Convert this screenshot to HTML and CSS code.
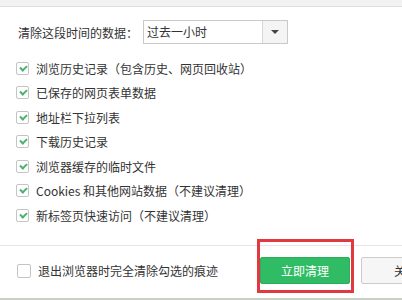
FILE: index.html
```html
<!DOCTYPE html>
<html lang="zh-CN">
<head>
<meta charset="utf-8">
<link rel="stylesheet" href="styles.css">
</head>
<body>
<div class="dialog">
  <div class="topbar"></div>
  <div class="range">
    <span class="range-label">清除这段时间的数据：</span>
    <div class="select">
      <span class="select-value">过去一小时</span>
      <span class="select-btn"><span class="arrow"></span></span>
    </div>
  </div>
  <ul class="list">
    <li class="item"><span class="cb checked"></span><span>浏览历史记录（包含历史、网页回收站）</span></li>
    <li class="item"><span class="cb checked"></span><span>已保存的网页表单数据</span></li>
    <li class="item"><span class="cb checked"></span><span>地址栏下拉列表</span></li>
    <li class="item"><span class="cb checked"></span><span>下载历史记录</span></li>
    <li class="item"><span class="cb checked"></span><span>浏览器缓存的临时文件</span></li>
    <li class="item"><span class="cb checked"></span><span>Cookies 和其他网站数据（不建议清理）</span></li>
    <li class="item"><span class="cb checked"></span><span>新标签页快速访问（不建议清理）</span></li>
  </ul>
  <div class="footer">
    <label class="exit-opt"><span class="cb cb-lg"></span><span>退出浏览器时完全清除勾选的痕迹</span></label>
    <button class="btn btn-primary">立即清理</button>
    <button class="btn btn-close">关闭</button>
    <div class="highlight"></div>
  </div>
  <div class="bottom-line"></div>
</div>
</body>
</html>
```

FILE: styles.css
```css
html, body {
  margin: 0;
  padding: 0;
  background: #ffffff;
}
.dialog {
  width: 402px;
  height: 300px;
  overflow: hidden;
  position: relative;
  font-family: "Noto Sans CJK SC", "Microsoft YaHei", sans-serif;
  font-size: 12px;
  color: #333333;
}
.topbar {
  height: 6px;
  background: #f2f2f2;
  border-bottom: 1px solid #dedede;
}
.range {
  display: flex;
  align-items: center;
  margin-top: 13px;
  padding-left: 18px;
  height: 24px;
}
.range-label {
  width: 125px;
  white-space: nowrap;
}
.select {
  display: flex;
  width: 145px;
  height: 24px;
  box-sizing: border-box;
  border: 1px solid #c9c9c9;
  background: #fff;
}
.select-value {
  flex: 1;
  padding-left: 3px;
  line-height: 22px;
}
.select-btn {
  width: 24px;
  border-left: 1px solid #d6d6d6;
  background: #f4f4f4;
  display: flex;
  align-items: center;
  justify-content: center;
}
.arrow {
  width: 0;
  height: 0;
  border-left: 4px solid transparent;
  border-right: 4px solid transparent;
  border-top: 4px solid #444;
}
.list {
  list-style: none;
  margin: 12px 0 0;
  padding: 0 0 0 16px;
}
.item {
  display: flex;
  align-items: center;
  height: 24.5px;
  white-space: nowrap;
}
.cb {
  width: 13px;
  height: 13px;
  box-sizing: border-box;
  border: 1px solid #c4c4c4;
  border-radius: 2px;
  background: #fff;
  margin-right: 7px;
  position: relative;
  flex: none;
}
.cb.checked::after {
  content: "";
  position: absolute;
  left: 3px;
  top: 2px;
  width: 5px;
  height: 3px;
  border-left: 2px solid #4cb36f;
  border-bottom: 2px solid #4cb36f;
  transform: rotate(-45deg);
}
.cb-lg {
  width: 14px;
  height: 14px;
}
.footer {
  position: relative;
  margin-top: 17px;
  border-top: 1px solid #e6e6e6;
  height: 53px;
  display: flex;
  align-items: center;
  padding-left: 17px;
  padding-bottom: 2px;
  box-sizing: border-box;
}
.exit-opt {
  display: flex;
  align-items: center;
  white-space: nowrap;
  width: 243px;
  flex: none;
}
.btn {
  flex: none;
  width: 90px;
  height: 27px;
  box-sizing: border-box;
  font-family: inherit;
  font-size: 12px;
  border-radius: 2px;
  padding: 0;
  margin: 0;
}
.btn-primary {
  background: #30bc65;
  border: 1px solid #2caf5d;
  color: #ffffff;
}
.btn-close {
  margin-left: 11px;
  background: #f6f6f6;
  border: 1px solid #cccccc;
  color: #333;
}
.highlight {
  position: absolute;
  left: 257px;
  top: -7px;
  width: 97px;
  height: 54px;
  box-sizing: border-box;
  border: 3px solid #e2383f;
}
.bottom-line {
  height: 2px;
  background: #c9cec6;
}
```
